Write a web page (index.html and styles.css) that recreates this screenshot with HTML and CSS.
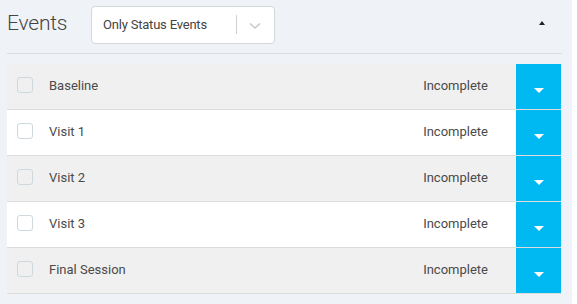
FILE: index.html
```html
<html>
<head>
  <title>Events</title>
  <link rel="stylesheet" href="styles.css">
</head>
<body>
  <div class="panel">
    <div class="head">
      <h1>Events</h1>
      <div class="select">
        <span class="select_value">Only Status Events</span>
        <span class="select_sep"></span>
        <svg class="select_arrow" width="12" height="8" viewBox="0 0 12 8"><path d="M1 1.5 L6 6 L11 1.5" fill="none" stroke="#c8c8c8" stroke-width="1.6"/></svg>
      </div>
      <span class="collapse"></span>
    </div>
    <div class="list">
      <div class="row">
        <span class="check"></span>
        <span class="name">Baseline</span>
        <span class="status">Incomplete</span>
        <span class="more"><i></i></span>
      </div>
      <div class="row">
        <span class="check"></span>
        <span class="name">Visit 1</span>
        <span class="status">Incomplete</span>
        <span class="more"><i></i></span>
      </div>
      <div class="row">
        <span class="check"></span>
        <span class="name">Visit 2</span>
        <span class="status">Incomplete</span>
        <span class="more"><i></i></span>
      </div>
      <div class="row">
        <span class="check"></span>
        <span class="name">Visit 3</span>
        <span class="status">Incomplete</span>
        <span class="more"><i></i></span>
      </div>
      <div class="row">
        <span class="check"></span>
        <span class="name">Final Session</span>
        <span class="status">Incomplete</span>
        <span class="more"><i></i></span>
      </div>
    </div>
  </div>
</body>
</html>
```
FILE: styles.css
```css
* {
  margin: 0;
  box-sizing: border-box;
  font-family: Roboto, "Liberation Sans", sans-serif;
}

body {
  background: #ffffff;
}

.panel {
  width: 572px;
  height: 304px;
  background: #eff3f7;
  padding: 6px 10px 0 7px;
}

.head {
  display: flex;
  align-items: center;
  height: 48px;
  padding-bottom: 10px;
  border-bottom: 1px solid #d9dde1;
}

.head h1 {
  font-size: 21px;
  font-weight: 300;
  color: #444;
  letter-spacing: -0.2px;
  width: 84px;
  margin-top: -3px;
}

.select {
  display: flex;
  align-items: center;
  width: 184px;
  height: 38px;
  background: #fff;
  border: 1px solid #d4d7db;
  border-radius: 4px;
  padding-left: 11px;
}

.select_value {
  font-size: 13px;
  color: #444;
  letter-spacing: -0.2px;
  flex: 1;
}

.select_sep {
  width: 1px;
  height: 19px;
  background: #cfcfcf;
}

.select_arrow {
  margin: 2px 13px 0 12px;
}

.collapse {
  margin-left: auto;
  margin-right: 17px;
  margin-top: -3px;
  width: 0;
  height: 0;
  border-left: 3.5px solid transparent;
  border-right: 3.5px solid transparent;
  border-bottom: 4px solid #222;
}

.list {
  margin-top: 10px;
  width: 554px;
}

.row {
  display: flex;
  align-items: center;
  height: 46px;
  background: #f0f0f0;
  border-bottom: 1px solid #dcdcdc;
  padding-left: 10px;
}

.row:nth-child(even) {
  background: #fff;
}

.check {
  width: 16px;
  height: 16px;
  border: 1px solid #cfd8dc;
  border-radius: 3px;
  background: transparent;
  margin-top: -3px;
}

.name {
  margin-left: 16px;
  font-size: 13px;
  color: #4a4a4a;
  flex: 1;
  margin-top: -3px;
}

.status {
  font-size: 13px;
  color: #4a4a4a;
  margin-right: 28px;
  margin-top: -3px;
}

.more {
  width: 45px;
  height: 45px;
  background: #00b9f2;
  display: flex;
  align-items: center;
  justify-content: center;
}

.more i {
  margin-top: 8px;
  width: 0;
  height: 0;
  border-left: 5px solid transparent;
  border-right: 5px solid transparent;
  border-top: 5px solid #fff;
}
```
